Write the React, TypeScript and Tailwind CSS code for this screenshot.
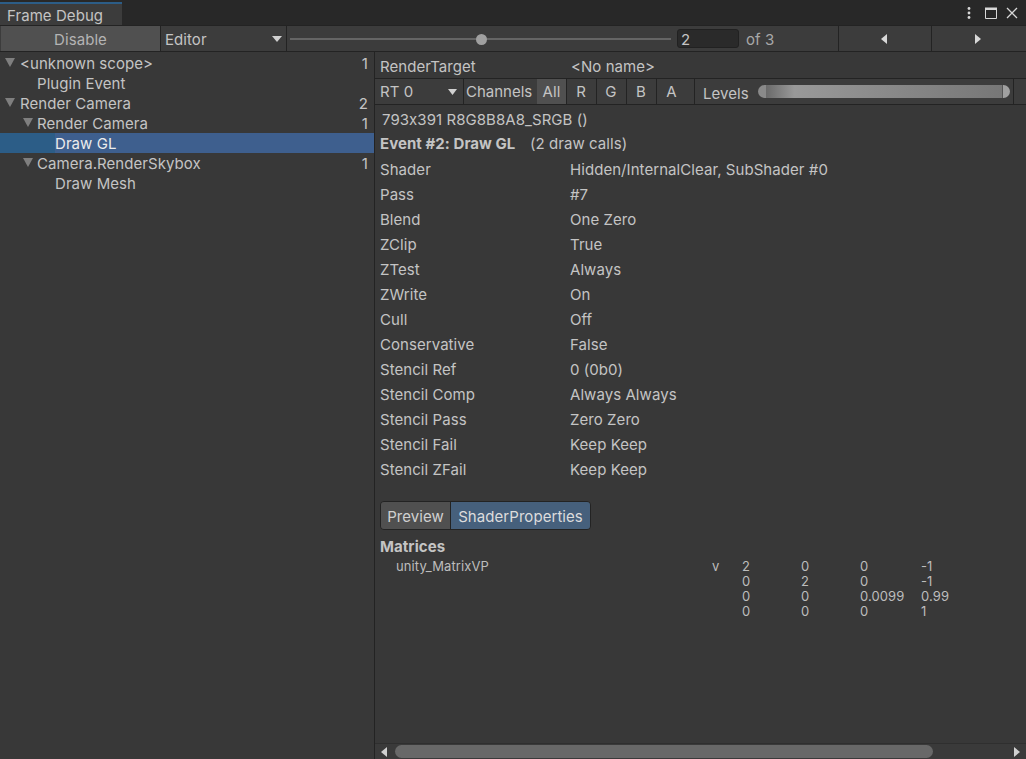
import { ReactNode } from "react";

const treeRows = [
  { label: "<unknown scope>", indent: 20, arrow: "left-[5px]", count: "1" },
  { label: "Plugin Event", indent: 37, count: "" },
  { label: "Render Camera", indent: 20, arrow: "left-[5px]", count: "2" },
  { label: "Render Camera", indent: 37, arrow: "left-[23px]", count: "1" },
  { label: "Draw GL", indent: 55, count: "", selected: true },
  { label: "Camera.RenderSkybox", indent: 37, arrow: "left-[23px]", count: "1" },
  { label: "Draw Mesh", indent: 55, count: "" },
];

const stateRows = [
  ["Shader", "Hidden/InternalClear, SubShader #0"],
  ["Pass", "#7"],
  ["Blend", "One Zero"],
  ["ZClip", "True"],
  ["ZTest", "Always"],
  ["ZWrite", "On"],
  ["Cull", "Off"],
  ["Conservative", "False"],
  ["Stencil Ref", "0 (0b0)"],
  ["Stencil Comp", "Always Always"],
  ["Stencil Pass", "Zero Zero"],
  ["Stencil Fail", "Keep Keep"],
  ["Stencil ZFail", "Keep Keep"],
];

const matrix = [
  ["2", "0", "0", "-1"],
  ["0", "2", "0", "-1"],
  ["0", "0", "0.0099", "0.99"],
  ["0", "0", "0", "1"],
];

const Tri = ({ dir, className }: { dir: "down" | "left" | "right"; className: string }) => {
  const pts = dir === "down" ? "0,0 10,0 5,9" : dir === "left" ? "8,0 8,10 0,5" : "0,0 0,10 8,5";
  const box = dir === "down" ? "0 0 10 9" : "0 0 8 10";
  return (
    <svg viewBox={box} preserveAspectRatio="none" className={className}>
      <polygon points={pts} fill="currentColor" />
    </svg>
  );
};

const Channel = ({ children, w, active, extra }: { children: ReactNode; w: string; active?: boolean; extra?: string }) => (
  <div className={`flex items-center justify-center border-r border-[#232323] pt-[2px] ${w} ${extra ?? "pr-[1px]"} ${active ? "bg-[#505050]" : ""}`}>
    {children}
  </div>
);

export default function App() {
  return (
    <div className="flex h-[759px] w-[1026px] flex-col overflow-hidden bg-[#383838] text-[15px] tracking-[0.06px] text-[#c4c4c4] [font-family:Inter,'Liberation_Sans',sans-serif] [font-feature-settings:'calt'_0]">
      {/* tab strip */}
      <div className="flex h-[26px] shrink-0 items-end justify-between border-b border-[#232323] bg-[#282828]">
        <div className="h-[23px] w-[122px] border-t-2 border-[#2c5d87] bg-[#3c3c3c] pl-[7px] leading-[24px]">Frame Debug</div>
        <div className="mr-[8px] flex h-full items-center text-[#d8d8d8]">
          <svg viewBox="0 0 4 12" className="h-[12px] w-[4px]">
            <circle cx="2" cy="1.5" r="1.4" fill="currentColor" />
            <circle cx="2" cy="6" r="1.4" fill="currentColor" />
            <circle cx="2" cy="10.5" r="1.4" fill="currentColor" />
          </svg>
          <svg viewBox="0 0 12 12" className="ml-[14px] h-[12px] w-[12px]">
            <path d="M0.5 1.5h11v10h-11z" fill="none" stroke="currentColor" strokeWidth="1" />
            <rect x="0" y="0.5" width="12" height="2.5" fill="currentColor" />
          </svg>
          <svg viewBox="0 0 12 12" className="ml-[9px] h-[12px] w-[12px]">
            <path d="M1 1l10 10M11 1L1 11" fill="none" stroke="currentColor" strokeWidth="1.3" />
          </svg>
        </div>
      </div>

      {/* toolbar */}
      <div className="flex h-[26px] shrink-0 items-stretch border-b border-[#232323] bg-[#3c3c3c]">
        <div className="ml-[1px] flex w-[160px] items-center justify-center border-r border-[#232323] bg-[#505050] pt-[3px] text-[#b4b4b4]">Disable</div>
        <div className="flex w-[126px] items-center justify-between border-r border-[#232323] pl-[4px] pr-[4px] pt-[3px]">
          <span>Editor</span>
          <Tri dir="down" className="mb-[3px] h-[6px] w-[10px] text-[#d0d0d0]" />
        </div>
        <div className="relative ml-[3px] flex w-[381px] items-center pt-[1px]">
          <div className="h-[2px] w-full bg-[#656565]" />
          <div className="absolute left-[186px] top-[8px] h-[11px] w-[11px] rounded-full bg-[#a0a0a0]" />
        </div>
        <div className="my-[3px] ml-[6px] flex w-[62px] items-center rounded-[3px] border border-[#212121] bg-[#2a2a2a] pl-[3px] pt-[3px]">2</div>
        <div className="ml-[7px] flex w-[92px] items-center pt-[3px] text-[#a8a8a8]">of 3</div>
        <div className="flex w-[94px] items-center justify-center border-x border-[#232323] pr-[2px] pt-[1px]">
          <Tri dir="left" className="h-[10px] w-[6px] text-[#d8d8d8]" />
        </div>
        <div className="flex w-[94px] items-center justify-center pr-[2px] pt-[1px]">
          <Tri dir="right" className="h-[10px] w-[6px] text-[#d8d8d8]" />
        </div>
      </div>

      <div className="flex min-h-0 flex-1">
        {/* event tree */}
        <div className="w-[375px] shrink-0 border-r border-[#232323] pt-[1px]">
          {treeRows.map((r, i) => (
            <div
              key={i}
              className={`relative flex h-[20px] items-center justify-between pr-[6px] pt-[2px] ${r.selected ? "bg-[#3e5f8e] text-[#ececec]" : ""}`}
              style={{ paddingLeft: r.indent }}
            >
              {r.selected && <div className="absolute left-0 top-0 h-full w-[55px] bg-[#2c5d87]" />}
              {r.arrow && <Tri dir="down" className={`absolute top-[5px] h-[9px] w-[10px] text-[#7f7f7f] ${r.arrow}`} />}
              <span className="relative">{r.label}</span>
              <span>{r.count}</span>
            </div>
          ))}
        </div>

        {/* details */}
        <div className="relative flex min-w-0 flex-1 flex-col">
          <div className="flex h-[26px] shrink-0 items-center pl-[5px] pt-[4px]">
            <span className="w-[191px]">RenderTarget</span>
            <span>&lt;No name&gt;</span>
          </div>
          <div className="flex h-[27px] shrink-0 items-stretch border-y border-[#232323] bg-[#3c3c3c]">
            <div className="flex w-[89px] items-center justify-between border-r border-[#232323] pl-[5px] pr-[6px] pt-[1px]">
              <span>RT 0</span>
              <Tri dir="down" className="h-[6px] w-[9px] text-[#d0d0d0]" />
            </div>
            <div className="flex w-[73px] items-center pl-[2px] pt-[1px] tracking-normal">Channels</div>
            <Channel w="w-[30px]" active extra="pr-0">All</Channel>
            <Channel w="w-[30px]">R</Channel>
            <Channel w="w-[30px]">G</Channel>
            <Channel w="w-[30px]">B</Channel>
            <Channel w="w-[38px]" extra="pr-[8px]">A</Channel>
            <div className="flex w-[319px] items-center border-r border-[#232323] pl-[8px]">
              <span className="mt-[5px] w-[55px] shrink-0">Levels</span>
              <div className="flex h-[13px] w-[252px] items-stretch">
                <div className="w-[8px] rounded-l-full bg-[#8a8a8a]" />
                <div className="flex-1 bg-gradient-to-r from-[#6a6a6a] via-[#999999] via-[12%] to-[#777777]" />
                <div className="w-[8px] rounded-r-full border-l border-[#555555] bg-[#a0a0a0]" />
              </div>
            </div>
          </div>

          <div className="pl-[5px] pt-[5px]">
            <div className="flex h-[20px] items-center pl-[2px]">793x391 R8G8B8A8_SRGB ()</div>
            <div className="mt-[4px] flex h-[20px] items-center">
              <span className="w-[150px] font-bold">Event #2: Draw GL</span>
              <span>(2 draw calls)</span>
            </div>
            <div className="mt-[4px]">
              {stateRows.map(([k, v]) => (
                <div key={k} className="flex h-[25px] items-center">
                  <span className="w-[190px]">{k}</span>
                  <span>{v}</span>
                </div>
              ))}
            </div>

            <div className="mt-[18px] flex h-[29px] w-[211px] overflow-hidden rounded-[4px] border border-[#232323]">
              <div className="flex w-[70px] items-center justify-center border-r border-[#232323] bg-[#505050] pt-[3px] text-[#d0d0d0]">Preview</div>
              <div className="flex flex-1 items-center justify-center bg-[#46607c] pt-[3px] text-[#dcdcdc]">ShaderProperties</div>
            </div>

            <div className="mt-[7px] font-bold leading-[20px]">Matrices</div>
            <div className="mt-[2px] flex text-[13px] leading-[15px] tracking-[0.1px] text-[#bdbdbd]">
              <span className="w-[332px] pl-[16px]">unity_MatrixVP</span>
              <span className="w-[30px]">v</span>
              <div>
                {matrix.map((row, i) => (
                  <div key={i} className="grid grid-cols-[59px_59px_61px_40px]">
                    {row.map((c, j) => (
                      <span key={j}>{c}</span>
                    ))}
                  </div>
                ))}
              </div>
            </div>
          </div>

          {/* horizontal scrollbar */}
          <div className="mt-auto flex h-[16px] shrink-0 items-center border-t border-[#2f2f2f] bg-[#3a3a3a] pl-[6px] pr-[6px]">
            <Tri dir="left" className="h-[10px] w-[6px] text-[#d0d0d0]" />
            <div className="ml-[8px] h-[13px] w-[538px] rounded-full bg-[#686868]" />
            <div className="flex-1" />
            <Tri dir="right" className="h-[10px] w-[6px] text-[#d0d0d0]" />
          </div>
        </div>
      </div>
    </div>
  );
}
